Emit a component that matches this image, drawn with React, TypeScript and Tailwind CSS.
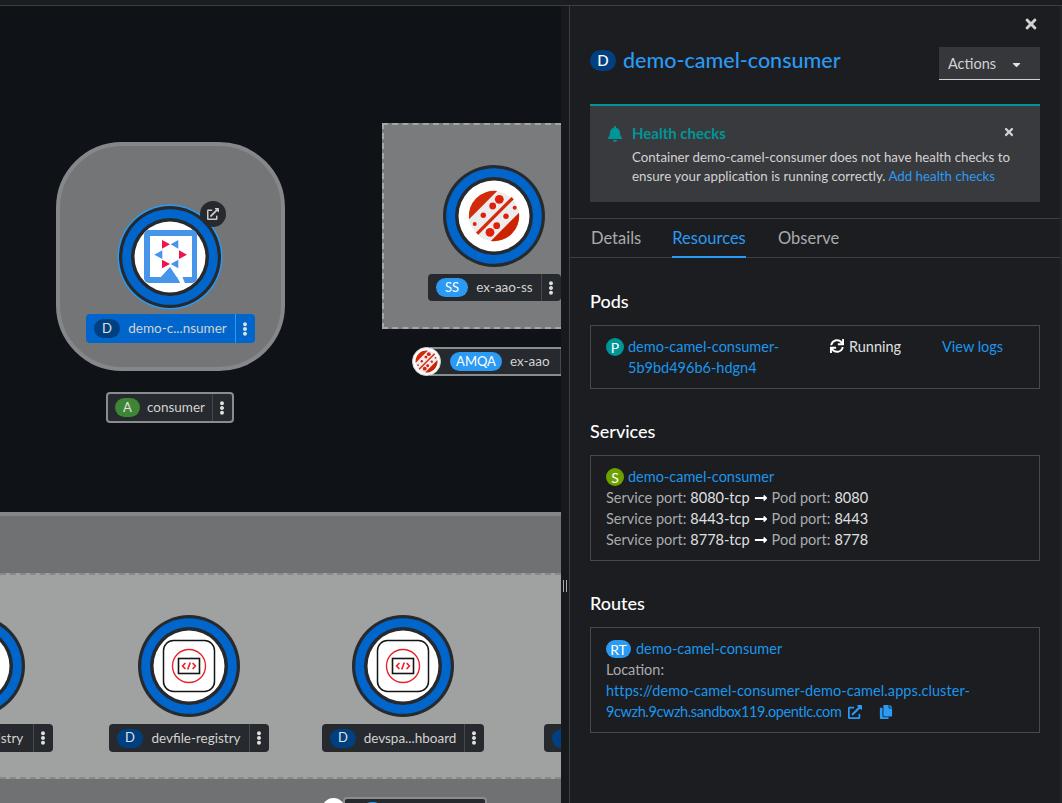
import React from 'react';
import {
  FaBell,
  FaCaretDown,
  FaCopy,
  FaEllipsisV,
  FaExternalLinkAlt,
  FaLongArrowAltRight,
  FaSync,
  FaTimes,
} from 'react-icons/fa';

const RING_DARK = '#26292d';

const NodeRings: React.FC<{ selected?: boolean; children?: React.ReactNode }> = ({ selected, children }) => (
  <svg viewBox="-54 -54 108 108" className="w-full h-full">
    {selected && <circle r="52.5" fill="#2b9af3" />}
    <circle r="51" fill={RING_DARK} />
    <circle r="47.8" fill="#0066cc" />
    <circle r="39" fill={RING_DARK} />
    <circle r="35.5" fill="#ffffff" />
    {children}
  </svg>
);

const QuarkusIcon = () => (
  <g>
    <rect x="-26" y="-27" width="53" height="53" rx="5" fill="#4695eb" />
    <rect x="-20" y="-21" width="42" height="41" fill="#ffffff" />
    <path d="M-10 21 L0 10 L7 20.5 V26 H-10 Z" fill="#4695eb" />
    <path d="M7 20 L12.5 20 L15 26.5 L11 27.5 Z" fill="#ffffff" />
    <path d="M-8 -17 L0 -12.7 L-8 -8.3 Z" fill="#f0134d" />
    <path d="M8.3 -17 V-8.3 L0.7 -12.7 Z" fill="#4695eb" />
    <path d="M-15.7 -2.3 L-7.7 -6.7 V2 Z" fill="#4695eb" />
    <path d="M17 -2.3 L9 -6.7 V2 Z" fill="#f0134d" />
    <path d="M-8 2.7 L0 7 L-8 11.3 Z" fill="#f0134d" />
    <path d="M8.3 2.7 V11.3 L0.7 7 Z" fill="#4695eb" />
  </g>
);

const AmqIcon: React.FC<{ scale?: number }> = ({ scale = 1 }) => (
  <g transform={`scale(${scale})`}>
    <circle r="25" fill="#ececec" />
    <path d="M-25 3.2 A25.2 25.2 0 0 1 3.2 -25 Z" fill="#d42a0c" />
    <path d="M25 -3.2 A25.2 25.2 0 0 1 -3.2 25 Z" fill="#cc2200" />
    <path d="M-18 16.5 L17.5 -19 L19.8 -16.7 L-15.7 18.8 Z" fill="#d42a0c" />
    <g fill="#e0200c">
      <circle cx="5.3" cy="-16.7" r="4.4" />
      <circle cx="-1.3" cy="-10" r="3.4" />
      <circle cx="-10.7" cy="-0.7" r="2.7" />
      <circle cx="-19.3" cy="8" r="2" />
      <circle cx="20.7" cy="-8.3" r="2" />
      <circle cx="12" cy="0.3" r="2.7" />
      <circle cx="2.7" cy="9.7" r="3.4" />
      <circle cx="-4" cy="16.3" r="4.4" />
    </g>
  </g>
);

const DevIcon = () => (
  <g fill="none">
    <rect x="-25.5" y="-25.5" width="51" height="51" rx="10" stroke="#151515" strokeWidth="1.5" />
    <circle r="16.5" stroke="#ee1f2b" strokeWidth="1.4" />
    <rect x="-10.5" y="-7.5" width="21" height="15" stroke="#151515" strokeWidth="1.6" />
    <path d="M-3.6 -3 L-6.4 0 L-3.6 3 M3.6 -3 L6.4 0 L3.6 3 M1.3 -3.6 L-1.3 3.6" stroke="#ee1f2b" strokeWidth="1.6" />
  </g>
);

type LabelProps = {
  className: string;
  badge: string;
  badgeClass: string;
  name: string;
  nameClass?: string;
  sepClass?: string;
};

const NodeLabel: React.FC<LabelProps> = ({ className, badge, badgeClass, name, nameClass, sepClass }) => (
  <div className={`absolute flex items-center text-[13.5px] text-[#d2d2d2] ${className}`}>
    <span className={`flex items-center justify-center h-[19px] rounded-full text-[13px] shrink-0 ${badgeClass}`}>{badge}</span>
    <span className={`flex-1 text-center whitespace-nowrap ${nameClass ?? ''}`}>{name}</span>
    <span className={`flex items-center justify-center self-stretch w-[20px] pr-[2px] border-l shrink-0 text-[#e0e0e0] ${sepClass ?? 'border-[#44474b]'}`}>
      <FaEllipsisV size={14} />
    </span>
  </div>
);

const Topology = () => (
  <div className="relative w-[561px] shrink-0 overflow-hidden bg-[#0f1216]">
    {/* application group */}
    <div className="absolute left-[56px] top-[136px] w-[229px] h-[229px] rounded-[66px] border-[4px] border-[#86878a] bg-[#747576]" />
    <div className="absolute left-[116px] top-[197px] w-[108px] h-[108px]">
      <NodeRings selected>
        <QuarkusIcon />
      </NodeRings>
    </div>
    <div className="absolute left-[200px] top-[195px] w-[26px] h-[26px] rounded-full bg-[#26292d] flex items-center justify-center text-[#c9cacb]">
      <FaExternalLinkAlt size={12} />
    </div>
    <NodeLabel
      className="left-[86px] top-[308px] w-[169px] h-[29px] rounded-[4px] bg-[#0066cc] pl-2"
      badge="D"
      badgeClass="w-[26px] bg-[#004080] text-[#e0e0e0]"
      name="demo-c...nsumer"
      sepClass="border-[#2b9af3]"
    />
    <NodeLabel
      className="left-[106px] top-[386px] w-[128px] h-[31px] rounded-[4px] bg-[#26292d] border-2 border-[#8a8d90] pl-[7px]"
      badge="A"
      badgeClass="w-[25px] bg-[#3e8635] text-[#e0e0e0]"
      name="consumer"
    />

    {/* stateful set, runs under the side panel */}
    <div className="absolute left-[382px] top-[117px] w-[220px] h-[206px] border-2 border-dashed border-[#a5a6a7] bg-[#7a7b7c]" />
    <div className="absolute left-[440px] top-[156px] w-[108px] h-[108px]">
      <NodeRings>
        <AmqIcon />
      </NodeRings>
    </div>
    <NodeLabel
      className="left-[428px] top-[268px] w-[133px] h-[27px] rounded-[4px] bg-[#26292d] pl-2"
      badge="SS"
      badgeClass="w-[32px] bg-[#2b9af3] text-[#ffffff]"
      name="ex-aao-ss"
    />
    <NodeLabel
      className="left-[430px] top-[341px] w-[150px] h-[29px] bg-[#26292d] border-y-2 border-[#8a8d90] pl-[20px]"
      badge="AMQA"
      badgeClass="w-[52px] bg-[#2b9af3] text-[#ffffff]"
      name="ex-aao"
      nameClass="text-left pl-2"
    />
    <div className="absolute left-[412px] top-[341px] w-[29px] h-[29px] rounded-full bg-white border border-[#d2d2d2]">
      <svg viewBox="-14.5 -14.5 29 29" className="w-full h-full">
        <AmqIcon scale={0.47} />
      </svg>
    </div>

    {/* project group */}
    <div className="absolute left-0 top-[506px] w-full h-[291px] border-t-[4px] border-[#85868a] bg-[#707173]" />
    <div className="absolute left-0 top-[567px] w-full h-[206px] border-y-2 border-dashed border-[#88898a] bg-[#a0a1a1]" />

    <div className="absolute left-[-80px] top-[606px] w-[108px] h-[108px]">
      <NodeRings />
    </div>
    <div className="absolute left-[135px] top-[606px] w-[108px] h-[108px]">
      <NodeRings>
        <DevIcon />
      </NodeRings>
    </div>
    <div className="absolute left-[349px] top-[606px] w-[108px] h-[108px]">
      <NodeRings>
        <DevIcon />
      </NodeRings>
    </div>
    <NodeLabel
      className="left-[-106px] top-[718px] w-[159px] h-[28px] rounded-[4px] bg-[#26292d] pl-2"
      badge="D"
      badgeClass="w-[26px] bg-[#004080] text-[#e0e0e0]"
      name="plugin-registry"
    />
    <NodeLabel
      className="left-[109px] top-[718px] w-[160px] h-[28px] rounded-[4px] bg-[#26292d] pl-2"
      badge="D"
      badgeClass="w-[26px] bg-[#004080] text-[#e0e0e0]"
      name="devfile-registry"
    />
    <NodeLabel
      className="left-[322px] top-[718px] w-[162px] h-[28px] rounded-[4px] bg-[#26292d] pl-2"
      badge="D"
      badgeClass="w-[26px] bg-[#004080] text-[#e0e0e0]"
      name="devspa...hboard"
    />
    <div className="absolute left-[544px] top-[718px] w-[160px] h-[28px] rounded-[4px] bg-[#26292d] pl-2 flex items-center">
      <span className="w-[26px] h-[19px] rounded-full bg-[#004080]" />
    </div>

    {/* next row, only its top edge is in view */}
    <div className="absolute left-[322px] top-[792px] w-[23px] h-[23px] rounded-full bg-white" />
    <div className="absolute left-[343px] top-[791px] w-[144px] h-[28px] rounded-[4px] border-2 border-[#8a8d90] bg-[#26292d]">
      <div className="absolute left-[17px] top-[3px] w-[21px] h-[19px] rounded-full bg-[#2b9af3]" />
    </div>
  </div>
);

const Badge: React.FC<{ className: string; children: React.ReactNode }> = ({ className, children }) => (
  <span className={`inline-flex items-center justify-center h-[18px] rounded-full text-[14px] text-white shrink-0 mt-[2px] ${className}`}>
    {children}
  </span>
);

const SectionTitle: React.FC<{ className?: string; children: React.ReactNode }> = ({ className, children }) => (
  <h3 className={`text-[18px] leading-[27px] font-medium text-white mb-[10px] ${className ?? 'mt-[29px]'}`}>{children}</h3>
);

const Box: React.FC<{ children: React.ReactNode }> = ({ children }) => (
  <div className="border border-[#47484b] pl-[15px] pr-3 pt-[10px] pb-[10px] text-[14.5px] leading-[21px]">{children}</div>
);

const Ports: React.FC<{ from: string; to: string }> = ({ from, to }) => (
  <div className="flex items-center text-[#aaabac]">
    <span>Service port:</span>
    <span className="ml-1 text-[#e0e0e0]">{from}-tcp</span>
    <FaLongArrowAltRight size={14} className="mx-[4px] text-white" />
    <span>Pod port:</span>
    <span className="ml-1 text-[#e0e0e0]">{to}</span>
  </div>
);

const SidePanel = () => (
  <div className="flex-1 min-w-0 border-l border-r-2 border-l-[#3c3f42] border-r-[#24262a] bg-[#1b1d21]">
    <div className="h-[41px] flex justify-end pt-[10px] pr-[21px] text-[#d2d2d2]">
      <FaTimes size={16} />
    </div>
    <div className="h-[33px] ml-[20px] mr-[20px] flex justify-between">
      <div className="flex items-start gap-[7px] pt-[3px]">
        <span className="flex items-center justify-center w-[26px] h-[21px] rounded-full bg-[#004080] text-white text-[15px] font-medium">D</span>
        <span className="text-[21.5px] leading-[20px] text-[#2b9af3] font-medium">demo-camel-consumer</span>
      </div>
      <div className="w-[101px] bg-[#36373a] border-b border-[#d2d2d2] flex items-center justify-between pl-[9px] pr-[17px] pt-[2px] text-[14.5px] text-[#d2d2d2]">
        <span>Actions</span>
        <FaCaretDown size={13} className="text-[#e0e0e0]" />
      </div>
    </div>

    <div className="mt-[24px] ml-[20px] mr-[20px] h-[98px] border-t-2 border-[#009596] bg-[#393a3e] pl-[17px] pt-[17px] pr-[25px]">
      <div className="flex items-center h-[21px]">
        <FaBell size={16} className="text-[#009596]" />
        <span className="ml-[9px] text-[15px] font-bold text-[#009596]">Health checks</span>
        <FaTimes size={12} className="ml-auto mb-1 text-[#d2d2d2]" />
      </div>
      <p className="mt-[4px] ml-[25px] text-[13.3px] leading-[19px] text-[#d2d2d2] whitespace-nowrap">
        Container demo-camel-consumer does not have health checks to
        <br />
        ensure your application is running correctly. <a className="text-[#2b9af3]">Add health checks</a>
      </p>
    </div>

    <div className="mt-[16px] h-[40px] border-y border-[#3c3f42] flex pl-[20px] text-[16.5px] text-[#aaabac]">
      <div className="w-[82px] pl-[1px] pt-[7px]">Details</div>
      <div className="w-[74px] pt-[7px] text-[#2b9af3] border-b-2 border-[#2b9af3] h-[39px] text-center">Resources</div>
      <div className="ml-[32px] pt-[7px]">Observe</div>
    </div>

    <div className="ml-[20px] mr-[20px]">
      <SectionTitle className="mt-[30px]">Pods</SectionTitle>
      <Box>
        <div className="flex">
          <div className="flex w-[224px] gap-[4px]">
            <Badge className="w-[18px] bg-[#009596]">P</Badge>
            <a className="text-[#1c96ec]">
              demo-camel-consumer-
              <br />
              5b9bd496b6-hdgn4
            </a>
          </div>
          <div className="flex items-start w-[112px] text-[#e0e0e0]">
            <FaSync size={14} className="mt-[3px] mr-[5px] text-white" />
            Running
          </div>
          <a className="text-[#1c96ec]">View logs</a>
        </div>
      </Box>

      <SectionTitle>Services</SectionTitle>
      <Box>
        <div className="flex gap-[4px]">
          <Badge className="w-[18px] bg-[#6ca100]">S</Badge>
          <a className="text-[#1c96ec]">demo-camel-consumer</a>
        </div>
        <Ports from="8080" to="8080" />
        <Ports from="8443" to="8443" />
        <Ports from="8778" to="8778" />
      </Box>

      <SectionTitle>Routes</SectionTitle>
      <Box>
        <div className="flex gap-[5px]">
          <Badge className="w-[25px] bg-[#2b9af3]">RT</Badge>
          <a className="text-[#1c96ec]">demo-camel-consumer</a>
        </div>
        <div className="text-[#aaabac]">Location:</div>
        <a className="text-[#1c96ec] tracking-[0.08px]">https://demo-camel-consumer-demo-camel.apps.cluster-</a>
        <div className="flex items-center text-[#1c96ec]">
          <a className="tracking-[-0.4px]">9cwzh.9cwzh.sandbox119.opentlc.com</a>
          <FaExternalLinkAlt size={14} className="ml-[7px] text-[#2b9af3]" />
          <FaCopy size={14} className="ml-[17px] text-[#2b9af3]" />
        </div>
      </Box>
    </div>
  </div>
);

export default function App() {
  return (
    <div className="w-[1062px] h-[803px] overflow-hidden flex flex-col bg-[#1b1d21] font-['Lato',sans-serif]">
      <div className="h-[6px] shrink-0 border-b border-[#3c3f42]" />
      <div className="flex flex-1 min-h-0">
        <Topology />
        <div className="relative w-[8px] shrink-0 bg-[#17191d]">
          <div className="absolute left-[2px] top-[574px] w-[4px] h-[12px] border-x border-[#aaabac]" />
        </div>
        <SidePanel />
      </div>
    </div>
  );
}
